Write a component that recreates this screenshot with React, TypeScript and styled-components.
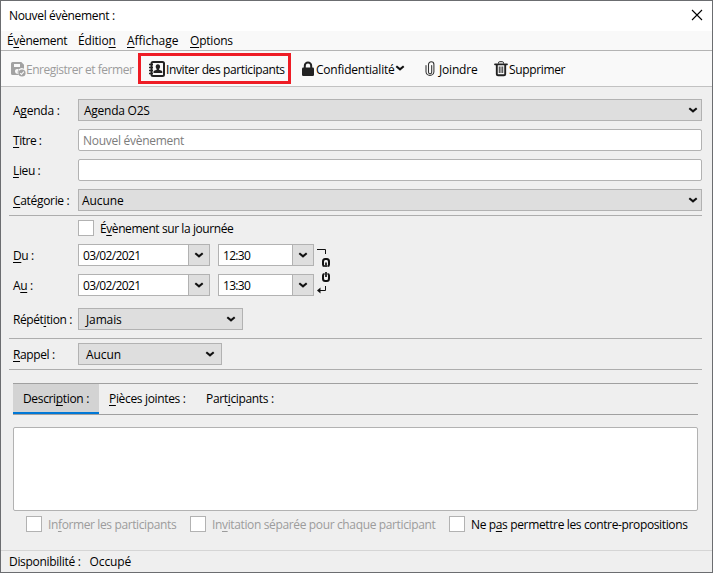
import React from 'react';
import styled, { createGlobalStyle, css } from 'styled-components';

const GlobalStyle = createGlobalStyle`
  *, *::before, *::after { box-sizing: border-box; }
  body { margin: 0; background: #efefef; }
`;

const Dialog = styled.div`
  display: flex;
  flex-direction: column;
  width: 713px;
  height: 573px;
  border: 1px solid #6b6d70;
  background: #efefef;
  color: #000;
  font: 12px/16px "Open Sans", "Noto Sans", sans-serif;
  white-space: nowrap;
  overflow: hidden;
`;

const Text = styled.span<{ $ls?: number }>`
  letter-spacing: ${(p) => (p.$ls ?? 0) - 0.28}px;
  u {
    text-underline-offset: 1.5px;
    text-decoration-thickness: 1px;
    text-decoration-skip-ink: none;
  }
`;

const TitleBar = styled.header`
  display: flex;
  justify-content: space-between;
  align-items: center;
  height: 30px;
  padding: 0 9px 0 8px;
  background: #fff;
`;

const CloseIcon = styled.svg`
  display: block;
  width: 12px;
  height: 12px;
  margin-top: -2px;
`;

const MenuBar = styled.nav`
  display: flex;
  align-items: center;
  height: 20px;
  padding-left: 6px;
  border-bottom: 1px solid #b4b4b4;
  background: #f9f9f9;
`;

const MenuItem = styled.div<{ $width: number }>`
  width: ${(p) => p.$width}px;
`;

const Toolbar = styled.div`
  display: flex;
  align-items: center;
  height: 36px;
  padding-left: 9px;
  border-bottom: 1px solid #c2c2c2;
  background: #f9f9f9;
  ${Text} {
    padding-top: 2px;
  }
`;

const ToolButton = styled.div<{ $width: number; $disabled?: boolean; $highlighted?: boolean }>`
  display: flex;
  align-items: center;
  flex: none;
  width: ${(p) => p.$width}px;
  color: ${(p) => (p.$disabled ? '#9c9c9c' : '#000')};
  ${(p) =>
    p.$highlighted &&
    css`
      height: 31px;
      margin-right: 9px;
      padding-left: 8px;
      border: 3px solid #ee1c25;
    `}
`;

const ToolIcon = styled.svg<{ $gap?: number }>`
  flex: none;
  display: block;
  width: 16px;
  height: 16px;
  margin-right: ${(p) => p.$gap ?? 0}px;
`;

const Section = styled.section<{ $height: number; $top?: number; $ruled?: boolean }>`
  height: ${(p) => p.$height}px;
  margin: 0 10px 0 8px;
  padding-top: ${(p) => p.$top ?? 0}px;
  ${(p) => p.$ruled && 'border-bottom: 1px solid #adadad;'}
`;

const FieldRow = styled.div<{ $height?: number }>`
  display: grid;
  grid-template-columns: 65px 1fr;
  align-items: center;
  height: ${(p) => p.$height ?? 30}px;
  padding-left: 4px;
  ${Text} {
    padding-top: 2px;
  }
`;

const inputFrame = css`
  height: 22px;
  border: 1px solid #b2b2b2;
`;

const Select = styled.div<{ $width?: number; $pad: number; $arrow?: number }>`
  ${inputFrame}
  display: flex;
  justify-content: space-between;
  align-items: center;
  width: ${(p) => (p.$width ? `${p.$width}px` : '100%')};
  padding: 0 ${(p) => p.$arrow ?? 3}px 0 ${(p) => p.$pad}px;
  background: #dedede;
`;

const Input = styled.div`
  ${inputFrame}
  padding: 3px 4px;
  border-radius: 2px;
  background: #fff;
  color: #7c7c7c;
`;

const Combo = styled.div<{ $width: number }>`
  ${inputFrame}
  display: flex;
  width: ${(p) => p.$width}px;
  background: #fff;
`;

const ComboValue = styled.div`
  flex: 1;
  padding: 3px 4px 0;
`;

const ComboButton = styled.div`
  display: grid;
  place-items: center;
  width: 21px;
  border-left: 1px solid #b2b2b2;
  background: #dedede;
`;

const ArrowSvg = styled.svg`
  flex: none;
  display: block;
  width: 10px;
  height: 6px;
  margin-top: -1px;
`;

const CheckRow = styled.div`
  display: flex;
  align-items: center;
  gap: 6px;
  ${Text} {
    padding-top: 2px;
  }
`;

const CheckBox = styled.span`
  flex: none;
  width: 16px;
  height: 16px;
  border: 1px solid #b2b2b2;
  background: #fff;
`;

const DateArea = styled.div`
  display: flex;
  height: 60px;
  margin-top: 2px;
`;

const DateRows = styled.div`
  width: 305px;
`;

const Pair = styled.div`
  display: flex;
  gap: 8px;
`;

const LinkSvg = styled.svg`
  display: block;
  width: 18px;
  height: 60px;
  margin-left: 2px;
`;

const TabBar = styled.div`
  display: flex;
  height: 32px;
  margin: 13px 14px 12px 12px;
  border-top: 1px solid #a0a0a0;
  border-bottom: 1px solid #a0a0a0;
`;

const Tab = styled.div<{ $width: number; $active?: boolean }>`
  width: ${(p) => p.$width}px;
  padding: 7px 10px 0;
  ${(p) =>
    p.$active &&
    css`
      border-bottom: 2px solid #0078d7;
      background: #d3d3d3;
    `}
`;

const Editor = styled.div`
  height: 84px;
  margin: 0 14px 0 12px;
  border: 1px solid #b2b2b2;
  border-radius: 2px;
  background: #fff;
`;

const Choices = styled.div`
  display: flex;
  height: 39px;
  padding: 5px 0 0 25px;
`;

const Choice = styled(CheckRow)<{ $width: number; $disabled?: boolean }>`
  width: ${(p) => p.$width}px;
  height: 16px;
  color: ${(p) => (p.$disabled ? '#9c9c9c' : '#000')};
`;

const StatusBar = styled.footer`
  display: flex;
  align-items: center;
  gap: 9px;
  height: 22px;
  padding-left: 8px;
  border-top: 1px solid #d5d5d5;
`;

const Arrow = () => (
  <ArrowSvg viewBox="0 0 10 6">
    <path d="M1.3 1.2 5 4.3 8.7 1.2" fill="none" stroke="#111" strokeWidth="2.1" />
  </ArrowSvg>
);

const SaveIcon = () => (
  <ToolIcon viewBox="0 0 16 16">
    <path
      fillRule="evenodd"
      fill="#a2a2a2"
      d="M2.5 1h8.8L14 3.7v4.1a4 4 0 0 0-5 6.2H2.500A1.500 1.500 0 0 1 1 12.500v-10A1.500 1.500 0 0 1 2.500 1ZM4 3v3h6V3ZM7.300 8a2.300 2.300 0 1 0 .7 4.500l1-3.800A2.300 2.300 0 0 0 7.300 8Z"
    />
    <circle cx="12" cy="12" r="3.6" fill="#a2a2a2" />
    <path d="m10.200 12.100 1.300 1.300 2.400-2.700" fill="none" stroke="#f9f9f9" strokeWidth="1.100" />
  </ToolIcon>
);

const ContactIcon = () => (
  <ToolIcon viewBox="0 0 16 16" $gap={1}>
    <rect x="2.500" y="1" width="12.500" height="14" rx="1.500" fill="#f9f9f9" stroke="#222" strokeWidth="2" />
    <path d="M0 3.500h4M0 6.500h4M0 9.500h4M0 12.500h4" stroke="#222" strokeWidth="1.300" />
    <path
      d="M8.900 3.200c1.500 0 2.200 1 2.200 2.300 0 1.200-.5 1.900-1 2.400v.8l2.600 1.100c.4.200.6.500.6 1V12H4.500v-1.200c0-.5.200-.8.600-1l2.600-1.100v-.8c-.5-.5-1-1.200-1-2.400 0-1.300.7-2.300 2.200-2.300Z"
      fill="#222"
    />
  </ToolIcon>
);

const LockIcon = () => (
  <ToolIcon viewBox="0 0 16 16">
    <path d="M4.800 8V4.700a3.200 3.200 0 0 1 6.400 0V8" fill="none" stroke="#222" strokeWidth="2" />
    <rect x="2" y="6.500" width="12" height="8.500" rx="1.300" fill="#222" />
  </ToolIcon>
);

const ClipIcon = () => (
  <ToolIcon viewBox="0 0 16 16" $gap={1}>
    <path
      d="M9.700 4.500v6.700a1.600 1.600 0 0 1-3.200 0V3.500a2.700 2.700 0 0 1 5.400 0V11a4 4 0 0 1-7.900 0V4.500"
      fill="none"
      stroke="#333"
      strokeWidth="1.050"
      strokeLinecap="round"
    />
  </ToolIcon>
);

const TrashIcon = () => (
  <ToolIcon viewBox="0 0 16 16">
    <path d="M5.500 2.500V1.800C5.500 1 6 .7 6.600.7h2.800c.6 0 1.100.3 1.100 1.100v.7" fill="none" stroke="#222" />
    <path d="M2 3.300h12" stroke="#222" strokeWidth="1.800" strokeLinecap="round" />
    <path d="M3.800 4v9.200c0 .8.500 1.100 1.200 1.100h6c.7 0 1.200-.3 1.200-1.100V4" fill="none" stroke="#222" strokeWidth="1.900" />
    <path d="M6.300 5.500V12M8 5.500V12M9.700 5.500V12" stroke="#222" strokeWidth=".9" />
  </ToolIcon>
);

const TimeLink = () => (
  <LinkSvg viewBox="0 0 18 60" fill="none" stroke="#111">
    <path d="M1 9.500h8.500V14M9.500 46v4.500H3" />
    <path d="M4.500 47.500 1 50.500l3.500 3Z" fill="#111" stroke="none" />
    <path d="M8.800 26H8.200Q7 26 7 24.500v-3Q7 19 9.200 19h1.600Q13 19 13 21.500v3Q13 26 11.800 26H11.500" strokeWidth="2" />
    <path d="M10 22.500v4.500M10 32v5" strokeWidth="1.700" />
    <path d="M8.500 34H8.200Q7 34 7 35.500v3Q7 41 9.200 41h1.600Q13 41 13 38.500v-3Q13 34 11.800 34H11.500" strokeWidth="2" />
  </LinkSvg>
);

const DateTime = ({ time }: { time: string }) => (
  <Pair>
    <Combo $width={132}>
      <ComboValue><Text $ls={-0.33}>03/02/2021</Text></ComboValue>
      <ComboButton><Arrow /></ComboButton>
    </Combo>
    <Combo $width={96}>
      <ComboValue><Text $ls={-0.4}>{time}</Text></ComboValue>
      <ComboButton><Arrow /></ComboButton>
    </Combo>
  </Pair>
);

export default function App() {
  return (
    <>
      <GlobalStyle />
      <Dialog>
        <TitleBar>
          <Text $ls={-0.06}>Nouvel évènement :</Text>
          <CloseIcon viewBox="0 0 12 12">
            <path d="m1 1 10 10M11 1 1 11" stroke="#000" strokeWidth="1.100" />
          </CloseIcon>
        </TitleBar>
        <MenuBar>
          <MenuItem $width={71}><Text $ls={-0.04}>É<u>v</u>ènement</Text></MenuItem>
          <MenuItem $width={49}><Text $ls={0.1}>Éditio<u>n</u></Text></MenuItem>
          <MenuItem $width={63}><Text $ls={0.25}><u>A</u>ffichage</Text></MenuItem>
          <MenuItem $width={60}><Text $ls={0.07}><u>O</u>ptions</Text></MenuItem>
        </MenuBar>
        <Toolbar>
          <ToolButton $width={128} $disabled>
            <SaveIcon />
            <Text $ls={-0.2}>Enregistrer et fermer</Text>
          </ToolButton>
          <ToolButton $width={153} $highlighted>
            <ContactIcon />
            <Text $ls={-0.11}>Inviter des participants</Text>
          </ToolButton>
          <ToolButton $width={122}>
            <LockIcon />
            <Text $ls={0.07}>Confidentialité</Text>
            <Arrow />
          </ToolButton>
          <ToolButton $width={71}>
            <ClipIcon />
            <Text $ls={0.1}>Joindre</Text>
          </ToolButton>
          <ToolButton $width={80}>
            <TrashIcon />
            <Text $ls={-0.08}>Supprimer</Text>
          </ToolButton>
        </Toolbar>

        <Section $height={129} $top={8} $ruled>
          <FieldRow>
            <Text $ls={0.05}>A<u>g</u>enda :</Text>
            <Select $pad={5}><Text $ls={0.03}>Agenda O2S</Text><Arrow /></Select>
          </FieldRow>
          <FieldRow>
            <Text $ls={-0.2}><u>T</u>itre :</Text>
            <Input><Text>Nouvel évènement</Text></Input>
          </FieldRow>
          <FieldRow>
            <Text $ls={-0.1}><u>L</u>ieu :</Text>
            <Input />
          </FieldRow>
          <FieldRow>
            <Text $ls={-0.04}><u>C</u>atégorie :</Text>
            <Select $pad={3}><Text $ls={0.2}>Aucune</Text><Arrow /></Select>
          </FieldRow>
        </Section>

        <Section $height={123} $top={2} $ruled>
          <FieldRow $height={20}>
            <span />
            <CheckRow><CheckBox /><Text $ls={-0.14}>É<u>v</u>ènement sur la journée</Text></CheckRow>
          </FieldRow>
          <DateArea>
            <DateRows>
              <FieldRow><Text $ls={-0.1}><u>D</u>u :</Text><DateTime time="12:30" /></FieldRow>
              <FieldRow><Text $ls={-0.1}>A<u>u</u> :</Text><DateTime time="13:30" /></FieldRow>
            </DateRows>
            <TimeLink />
          </DateArea>
          <FieldRow $height={38}>
            <Text $ls={-0.12}>Répét<u>i</u>tion :</Text>
            <Select $width={165} $pad={7} $arrow={6}><Text $ls={0.15}>Jamais</Text><Arrow /></Select>
          </FieldRow>
        </Section>

        <Section $height={31} $ruled>
          <FieldRow>
            <Text $ls={-0.1}><u>R</u>appel :</Text>
            <Select $width={144} $pad={7} $arrow={6}><Text $ls={0.2}>Aucun</Text><Arrow /></Select>
          </FieldRow>
        </Section>

        <TabBar>
          <Tab $width={86} $active><Text $ls={-0.06}>Descri<u>p</u>tion :</Text></Tab>
          <Tab $width={97}><Text $ls={-0.06}><u>P</u>ièces jointes :</Text></Tab>
          <Tab $width={90}><Text $ls={-0.06}>Part<u>i</u>cipants :</Text></Tab>
        </TabBar>
        <Editor />
        <Choices>
          <Choice $width={164} $disabled><CheckBox /><Text $ls={-0.1}>In<u>f</u>ormer les participants</Text></Choice>
          <Choice $width={259} $disabled><CheckBox /><Text $ls={-0.08}>In<u>v</u>itation séparée pour chaque participant</Text></Choice>
          <Choice $width={245}><CheckBox /><Text $ls={-0.08}>Ne p<u>a</u>s permettre les contre-propositions</Text></Choice>
        </Choices>
        <StatusBar>
          <Text $ls={-0.03}>Disponibilité :</Text>
          <Text $ls={0.2}>Occupé</Text>
        </StatusBar>
      </Dialog>
    </>
  );
}
